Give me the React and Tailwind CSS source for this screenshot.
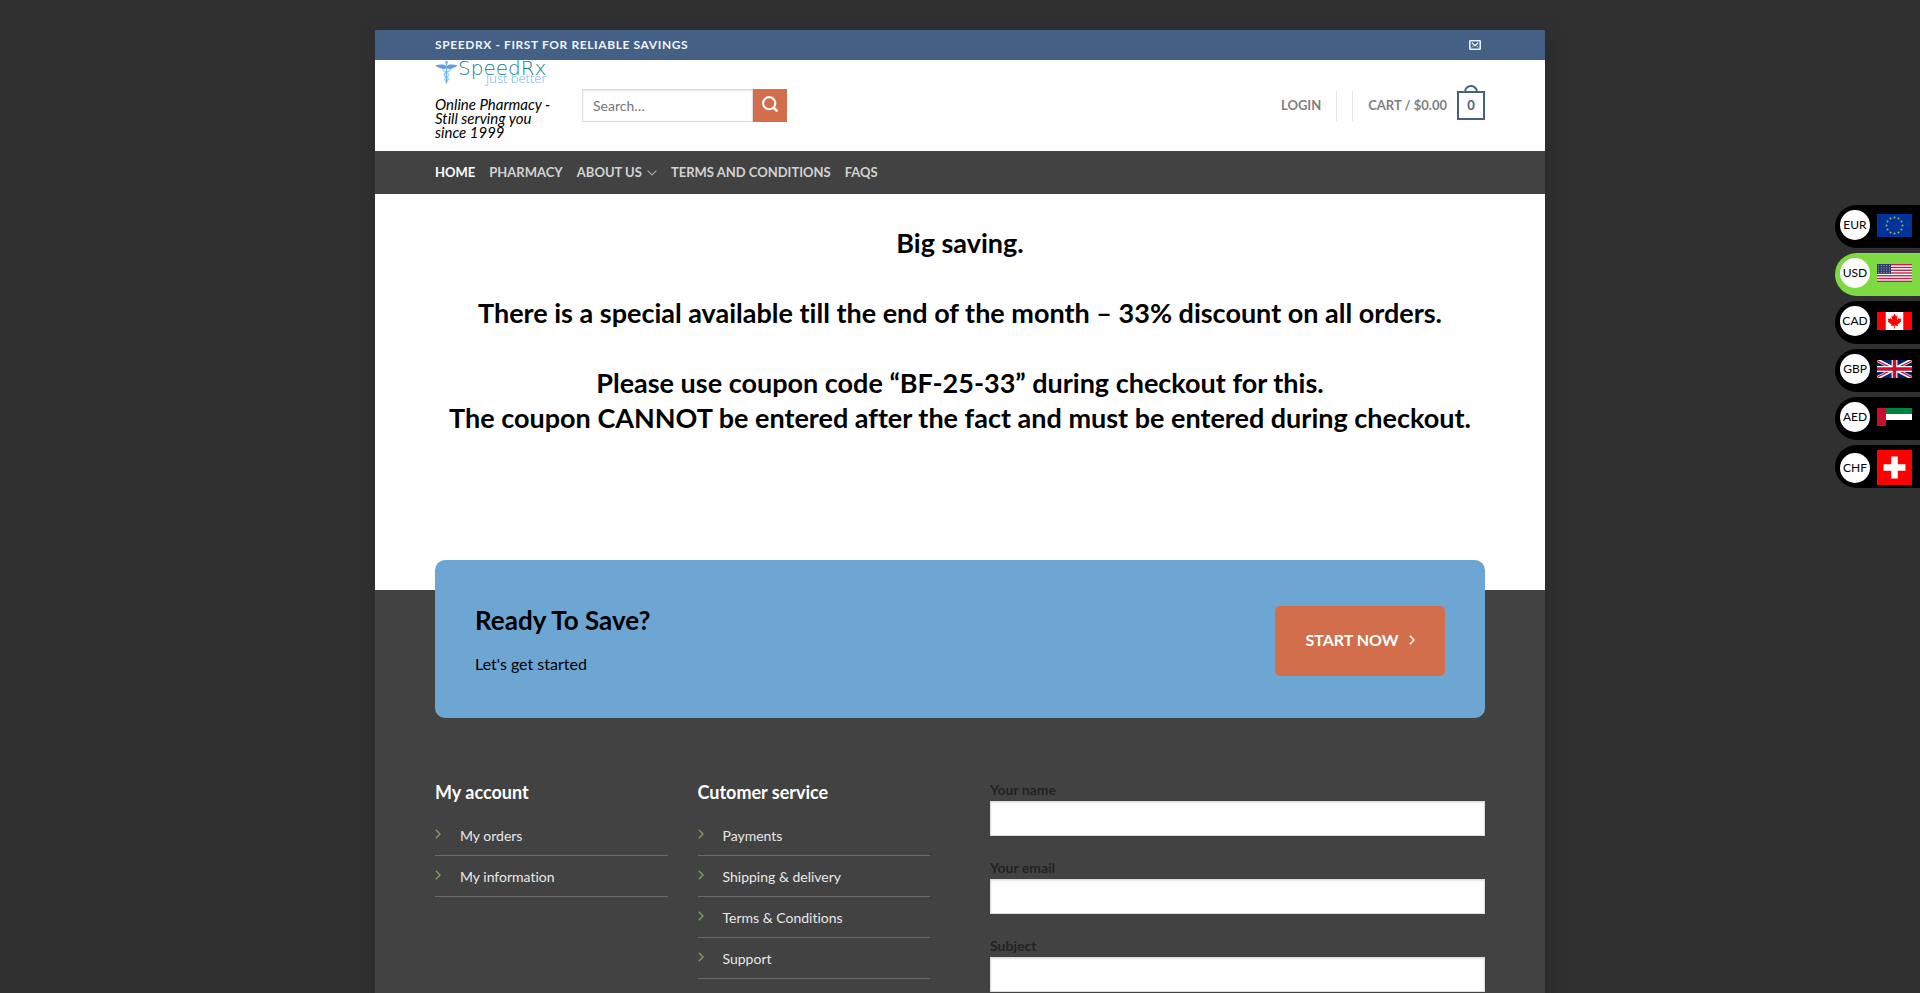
import React, { useState } from 'react';

// --- Navigation + footer data ---
const NAV_ITEMS = [
  { label: 'Home', active: true },
  { label: 'Pharmacy' },
  { label: 'About us', dropdown: true },
  { label: 'Terms and Conditions' },
  { label: 'FAQs' },
];

const FOOTER_COLUMNS = [
  { title: 'My account', links: ['My orders', 'My information'] },
  { title: 'Cutomer service', links: ['Payments', 'Shipping & delivery', 'Terms & Conditions', 'Support'] },
];

const CONTACT_FIELDS = [
  { id: 'your-name', label: 'Your name', type: 'text' },
  { id: 'your-email', label: 'Your email', type: 'email' },
  { id: 'your-subject', label: 'Subject', type: 'text' },
];

// --- Icons ---
const ChevronRight = ({ className }) => (
  <svg viewBox="0 0 6 10" className={className} fill="none" stroke="currentColor" strokeWidth="1.4" aria-hidden="true">
    <path d="M0.8 0.8 L5 5 L0.8 9.2" />
  </svg>
);

const ChevronDown = () => (
  <svg viewBox="0 0 10 6" className="w-[10px] h-[6px] text-[#a5a5a5]" fill="none" stroke="currentColor" strokeWidth="1.2" aria-hidden="true">
    <path d="M0.6 0.6 L5 5 L9.4 0.6" />
  </svg>
);

const SearchIcon = () => (
  <svg viewBox="0 0 16 16" className="w-4 h-4" fill="none" stroke="currentColor" strokeWidth="2.1" aria-hidden="true">
    <circle cx="7.2" cy="7.2" r="6.1" />
    <path d="M11.8 11.8 L14.6 14.6" strokeWidth="2.6" strokeLinecap="round" />
  </svg>
);

const MailIcon = () => (
  <svg viewBox="0 0 12 10" className="w-3 h-[10px]" fill="none" stroke="#e8f2fb" aria-hidden="true">
    <rect x="0.8" y="0.8" width="10.4" height="8.4" rx="0.4" strokeWidth="1.6" />
    <path d="M2.8 2.8 L6 5.8 L9.2 2.8" strokeWidth="1.4" />
    <path d="M2.6 7.6 L4.2 6 M9.4 7.6 L7.8 6" strokeWidth="0.9" />
  </svg>
);

const Caduceus = () => (
  <svg viewBox="0 0 23 24" className="w-[23px] h-6 shrink-0" fill="none" aria-hidden="true">
    <path d="M11 6 C8 3.4 4 4.6 0.5 5.2 C2 7.4 4 7.6 5 7.8 C6 9.4 9 9 11 8.6 Z" fill="#5b9be8" />
    <path d="M12 6 C15 3.4 19 4.6 22.5 5.2 C21 7.4 19 7.6 18 7.8 C17 9.4 14 9 12 8.6 Z" fill="#5b9be8" />
    <path d="M8 9 C6.6 11.5 15 12.5 14 15 C13.2 17 8.6 17.4 9.4 19.4 C10 20.6 12 21 12.4 22" stroke="#a3e3d6" strokeWidth="1.3" />
    <path d="M15 9 C16.6 11.5 8 12.5 9 15 C9.8 17 14.2 17.4 13.4 19.4 C12.8 20.6 11 21 10.6 22" stroke="#8ccdf4" strokeWidth="1.3" />
    <path d="M11.5 3 V23.4" stroke="#6fb0ec" strokeWidth="1.3" />
    <circle cx="11.5" cy="2.4" r="1.6" fill="#7fbcf0" />
  </svg>
);

// --- Flags ---
const FlagEU = () => (
  <svg viewBox="0 0 35 23" className="w-[35px] h-[23px]" aria-hidden="true">
    <rect width="35" height="23" fill="#039" />
    {Array.from({ length: 12 }, (_, i) => {
      const a = (i * Math.PI) / 6;
      return <circle key={i} cx={17.5 + 8 * Math.sin(a)} cy={11.5 - 8 * Math.cos(a)} r="1" fill="#b9ae45" />;
    })}
  </svg>
);

const FlagUS = () => (
  <svg viewBox="0 0 35 18" className="w-[35px] h-[18px]" aria-hidden="true">
    <rect width="35" height="18" fill="#fff" />
    {[0, 2, 4, 6, 8, 10, 12].map((i) => (
      <rect key={i} y={(i * 18) / 13} width="35" height={18 / 13} fill="#b9224a" />
    ))}
    <rect width="14" height="9.7" fill="#2f3c6c" />
    {[1.6, 3.8, 6, 8.2].map((y) =>
      [1.6, 4.3, 7, 9.7, 12.4].map((x) => <circle key={`${x}-${y}`} cx={x} cy={y} r="0.5" fill="#b8bfd4" />)
    )}
  </svg>
);

const FlagCA = () => (
  <svg viewBox="0 0 35 18" className="w-[35px] h-[18px]" aria-hidden="true">
    <rect width="35" height="18" fill="#fff" />
    <rect width="8.75" height="18" fill="#f00" />
    <rect x="26.25" width="8.75" height="18" fill="#f00" />
    <path
      d="M17.5 1.6 L16 4.4 L14.4 3.6 L15.2 8 L13.2 6 L12.8 7 L10.6 6.6 L11.4 9 L10.6 9.5 L14.4 12.6 L14 13.9 L17.2 13.4 L17.1 16.4 H17.9 L17.8 13.4 L21 13.9 L20.6 12.6 L24.4 9.5 L23.6 9 L24.4 6.6 L22.2 7 L21.8 6 L19.8 8 L20.6 3.6 L19 4.4 Z"
      fill="#f00"
    />
  </svg>
);

const FlagGB = () => (
  <svg viewBox="0 0 60 30" preserveAspectRatio="none" className="w-[35px] h-[18px]" aria-hidden="true">
    <rect width="60" height="30" fill="#012169" />
    <path d="M0 0 L60 30 M60 0 L0 30" stroke="#fff" strokeWidth="6" />
    <path d="M0 1 L30 16 M60 29 L30 14 M60 1 L30 16 M0 29 L30 14" stroke="#c8102e" strokeWidth="2" />
    <path d="M30 0 V30 M0 15 H60" stroke="#fff" strokeWidth="10" />
    <path d="M30 0 V30 M0 15 H60" stroke="#c8102e" strokeWidth="6" />
  </svg>
);

const FlagAE = () => (
  <svg viewBox="0 0 35 18" className="w-[35px] h-[18px]" aria-hidden="true">
    <rect width="35" height="18" fill="#000" />
    <rect width="35" height="6" fill="#00843d" />
    <rect y="6" width="35" height="6" fill="#fff" />
    <rect width="9" height="18" fill="#c8102e" />
  </svg>
);

const FlagCH = () => (
  <svg viewBox="0 0 32 32" className="w-[35px] h-[35px]" aria-hidden="true">
    <rect width="32" height="32" fill="#f00" />
    <path d="M13 6 H19 V13 H26 V19 H19 V26 H13 V19 H6 V13 H13 Z" fill="#fff" />
  </svg>
);

const CURRENCIES = [
  { code: 'EUR', Flag: FlagEU },
  { code: 'USD', Flag: FlagUS },
  { code: 'CAD', Flag: FlagCA },
  { code: 'GBP', Flag: FlagGB },
  { code: 'AED', Flag: FlagAE },
  { code: 'CHF', Flag: FlagCH },
];

// --- Component: Floating currency switcher ---
const CurrencySwitcher = () => {
  const [current, setCurrent] = useState('USD');

  return (
    <div className="fixed right-0 top-[205px] flex flex-col gap-[5px]">
      {CURRENCIES.map(({ code, Flag }) => (
        <button
          key={code}
          type="button"
          onClick={() => setCurrent(code)}
          className={`flex items-start h-[43px] pt-[5px] pl-[5px] pr-2 rounded-l-full ${current === code ? 'bg-[#7fd943]' : 'bg-black'}`}
        >
          <span className="flex items-center gap-[7px]">
            <span className="flex items-center justify-center size-[30px] rounded-full bg-white text-black text-xs">{code}</span>
            <Flag />
          </span>
        </button>
      ))}
    </div>
  );
};

// --- Component: Header ---
const Header = () => (
  <header>
    <div className="flex items-center justify-between h-[30px] px-[60px] bg-[#446084]">
      <strong className="text-xs font-bold uppercase tracking-wider text-[#eef4fa]">SpeedRx - First for reliable savings</strong>
      <a href="#contact" aria-label="Email us" className="pr-1">
        <MailIcon />
      </a>
    </div>

    <div className="flex items-center justify-between h-[91px] px-[60px] bg-white">
      <div className="flex items-center gap-[27px] self-stretch">
        <div className="w-[120px] self-start">
          <a href="#home" className="flex h-[33px] leading-none" aria-label="SpeedRx, just better">
            <Caduceus />
            <span className="flex flex-col items-end">
              <span className="font-['DejaVu_Sans'] font-extralight text-[20px] leading-4 text-[#14808a]">SpeedRx</span>
              <span className="font-['Open_Sans'] font-light text-[13px] leading-1 text-[#6db8e4]">Just better</span>
            </span>
          </a>
          <p className="mt-1 text-[15px] leading-[14px] italic text-black">Online Pharmacy - Still serving you since 1999</p>
        </div>
        <form className="flex" role="search" onSubmit={(e) => e.preventDefault()}>
          <input
            type="search"
            aria-label="Search"
            placeholder="Search…"
            className="w-[171px] h-[33px] px-[10px] bg-white border border-[#ddd] shadow-[inset_0_1px_2px_rgba(0,0,0,0.1)] text-sm text-[#333] placeholder:text-[#777] outline-none"
          />
          <button type="submit" aria-label="Submit" className="flex items-center justify-center w-[34px] h-[33px] pb-[3px] bg-[#d26e4b] text-white">
            <SearchIcon />
          </button>
        </form>
      </div>

      <div className="flex items-center text-[13px] font-bold uppercase text-[#7f7f7f]">
        <a href="#login" className="pr-[15px]">Login</a>
        <div className="w-[17px] h-[30px] border-x border-[#e5e5e5]" />
        <a href="#cart" className="flex items-center gap-[10px] pl-[15px]">
          <span>Cart / $0.00</span>
          <span className="relative flex items-center justify-center w-7 h-[29px] border-2 border-[#446084] text-[13px] text-[#446084]">
            <span className="absolute -top-2 left-[5px] w-[14px] h-2 rounded-t-full border-2 border-b-0 border-[#446084]" />
            0
          </span>
        </a>
      </div>
    </div>

    <nav className="flex items-center gap-[14px] h-[43px] px-[60px] bg-[#424242] text-[13px] font-bold uppercase">
      {NAV_ITEMS.map((item) => (
        <a key={item.label} href="#nav" className={`flex items-center gap-[5px] ${item.active ? 'text-white' : 'text-[#d3d3d3]'}`}>
          {item.label}
          {item.dropdown && <ChevronDown />}
        </a>
      ))}
    </nav>
  </header>
);

// --- Component: Footer ---
const Footer = () => (
  <footer className="grid grid-cols-4 px-[60px] pt-[60px] pb-10">
    {FOOTER_COLUMNS.map((col) => (
      <div key={col.title} className="pr-[30px]">
        <h3 className="text-lg leading-7 font-bold text-white">{col.title}</h3>
        <ul className="mt-[9px]">
          {col.links.map((link) => (
            <li key={link} className="flex items-center h-[41px] pt-[2px] gap-[19px] border-b border-[#6b6b6b]">
              <ChevronRight className="w-[6px] h-[10px] mb-1 text-[#7f9f56]" />
              <a href="#link" className="text-sm text-[#e8e8e8]">{link}</a>
            </li>
          ))}
        </ul>
      </div>
    ))}
    <form id="contact" className="col-span-2 pl-[30px] flex flex-col gap-5" onSubmit={(e) => e.preventDefault()}>
      {CONTACT_FIELDS.map((field) => (
        <div key={field.id}>
          <label htmlFor={field.id} className="block text-sm leading-[23px] font-bold text-[#222]">{field.label}</label>
          <input
            id={field.id}
            type={field.type}
            className="block w-full h-[35px] px-3 bg-white border border-[#ddd] shadow-[inset_0_1px_2px_rgba(0,0,0,0.1)] text-[#333]"
          />
        </div>
      ))}
    </form>
  </footer>
);

const App = () => (
  <div className="h-screen overflow-hidden bg-[#303030] pt-[30px] font-[Lato,sans-serif] [font-variant-ligatures:none]">
    <div className="mx-auto max-w-[1170px] bg-[#424242] shadow-[3px_3px_20px_0_rgba(0,0,0,0.15)]">
      <Header />

      <main>
        <section className="bg-white pt-[31px] pb-[155px] px-[60px] text-center">
          <h2 className="-mx-4 text-[27px] leading-[35px] font-bold text-black">
            Big saving.
            <br />
            <br />
            There is a special available till the end of the month – 33% discount on all orders.
            <br />
            <br />
            Please use coupon code “BF-25-33” during checkout for this.
            <br />
            The coupon CANNOT be entered after the fact and must be entered during checkout.
          </h2>
        </section>

        <section className="px-[60px]">
          <div className="-mt-[30px] flex items-start justify-between rounded-[10px] bg-[#6ea6d3] px-10 pt-[43px] pb-10">
            <div>
              <h2 className="text-[26px] leading-[35px] font-bold text-black">Ready To Save?</h2>
              <p className="mt-[14px] pb-[2px] text-base text-black">Let's get started</p>
            </div>
            <button type="button" className="mt-[3px] pb-[2px] flex items-center justify-center gap-[10px] w-[170px] h-[70px] rounded-[5px] bg-[#d26e4b] text-base font-bold uppercase text-white">
              Start now
              <ChevronRight className="w-[6px] h-[10px]" />
            </button>
          </div>
        </section>
      </main>

      <Footer />
    </div>

    <CurrencySwitcher />
  </div>
);

export default App;
